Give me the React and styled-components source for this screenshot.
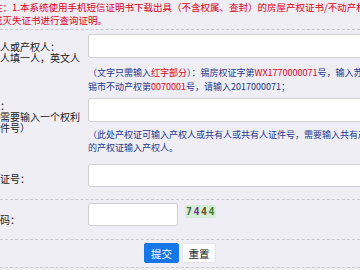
import React from "react";
import styled, { createGlobalStyle } from "styled-components";

const Global = createGlobalStyle`
  html, body { margin: 0; padding: 0; }
  body {
    background: #eeeef4;
    overflow: hidden;
    font-family: "Noto Sans CJK SC", "Noto Sans", sans-serif;
    font-size: 9.5px;
    color: #222;
  }
`;

const Form = styled.div`
  margin-left: -20px;
  width: calc(100vw + 20px);
`;

const Notice = styled.div`
  color: #e0001a;
  font-size: 9.5px;
  line-height: 13px;
  padding: 1px 0 2px 13px;
  white-space: nowrap;
  overflow: hidden;
  border-bottom: 1px dashed #c8c8d0;
`;

const Row = styled.div`
  display: grid;
  grid-template-columns: 108px minmax(0, 1fr);
  align-items: start;
  padding: ${(p) => p.$pad};
  border-bottom: ${(p) => (p.$dashed ? "1px dashed #c8c8d0" : "none")};
`;

const Label = styled.div`
  min-width: 0;
  margin-top: ${(p) => p.$top}px;
  font-size: 10px;
  line-height: ${(p) => p.$lh || 11}px;
  white-space: nowrap;
  overflow: hidden;
  color: #222;
`;

const Field = styled.div`
  display: flex;
  flex-direction: column;
  align-items: flex-start;
  min-width: 0;
`;

const Input = styled.input`
  box-sizing: border-box;
  width: ${(p) => p.$w}px;
  height: ${(p) => p.$h}px;
  border: 1px solid #cfcfd4;
  border-radius: 2px;
  background: #fff;
  outline: none;
  margin: 0;
  padding: 0 6px;
`;

const Help = styled.div`
  margin-top: ${(p) => p.$top}px;
  color: #1f3a8f;
  font-size: 9px;
  line-height: ${(p) => p.$lh}px;
  white-space: nowrap;
`;

const Red = styled.span`
  color: #e0001a;
`;

const CaptchaLine = styled.div`
  display: flex;
  align-items: flex-start;
`;

const Captcha = styled.div`
  margin: 2px 0 0 7px;
  width: 31px;
  height: 13px;
  background: #d6edd6;
  border-radius: 2px;
  display: flex;
  align-items: center;
  justify-content: center;
  gap: 1px;
  font-family: "DejaVu Sans Mono", monospace;
  font-weight: bold;
  font-size: 10px;
  letter-spacing: 0.5px;
`;

const Digit = styled.span`
  color: ${(p) => p.$c};
`;

const ButtonRow = styled.div`
  display: flex;
  justify-content: center;
  gap: 3px;
  padding: 3px 0 4px 20px;
  border-bottom: 1px dashed #c8c8d0;
`;

const Button = styled.button`
  width: ${(p) => p.$w}px;
  height: 20px;
  margin: 0;
  padding: 0;
  border-radius: 2px;
  font-family: "Noto Sans CJK SC", sans-serif;
  font-size: 10.5px;
  border: 1px solid ${(p) => (p.$primary ? "#1677e8" : "#e2e2e8")};
  background: ${(p) => (p.$primary ? "#1677e8" : "#fff")};
  color: ${(p) => (p.$primary ? "#fff" : "#222")};
`;

export default function App() {
  return (
    <>
      <Global />
      <Form>
        <Notice>
          注：1.本系统使用手机短信证明书下载出具（不含权属、查封）的房屋产权证书/不动产权证，不可以已注销
          <br />
          或灭失证书进行查询证明。
        </Notice>

        <Row $pad="4px 0 4px 0">
          <Label $top={7}>
            权利人或产权人：
            <br />
            （多人填一人，英文人
          </Label>
          <Field>
            <Input $w={300} $h={24} />
            <Help $top={8} $lh={14}>
              （文字只需输入<Red>红字部分</Red>）：锡房权证字第<Red>WX1770000071</Red>号，输入苏(2017)无
              <br />
              锡市不动产权第<Red>0070001</Red>号，请输入2017000071；
            </Help>
          </Field>
        </Row>

        <Row $pad="0 0 10px 0">
          <Label $top={2} $lh={11}>
            证号：
            <br />
            （只需要输入一个权利
            <br />
            人证件号）
          </Label>
          <Field>
            <Input $w={300} $h={24} />
            <Help $top={6} $lh={13}>
              （此处产权证可输入产权人或共有人或共有人证件号，需要输入共有产权证号的
              <br />
              的产权证输入产权人。
            </Help>
          </Field>
        </Row>

        <Row $pad="0 0 12px 0" $dashed>
          <Label $top={9} $lh={12}>
            身份证号：
          </Label>
          <Field>
            <Input $w={300} $h={23} />
          </Field>
        </Row>

        <Row $pad="3px 0 13px 0" $dashed>
          <Label $top={11} $lh={12}>
            验证码：
          </Label>
          <CaptchaLine>
            <Input $w={90} $h={23} />
            <Captcha>
              <Digit $c="#3f6b3f">7</Digit>
              <Digit $c="#6a3a8a">4</Digit>
              <Digit $c="#6b4a1a">4</Digit>
              <Digit $c="#3f7a2f">4</Digit>
            </Captcha>
          </CaptchaLine>
        </Row>

        <ButtonRow>
          <Button $primary $w={35}>提交</Button>
          <Button $w={34}>重置</Button>
        </ButtonRow>
      </Form>
    </>
  );
}
